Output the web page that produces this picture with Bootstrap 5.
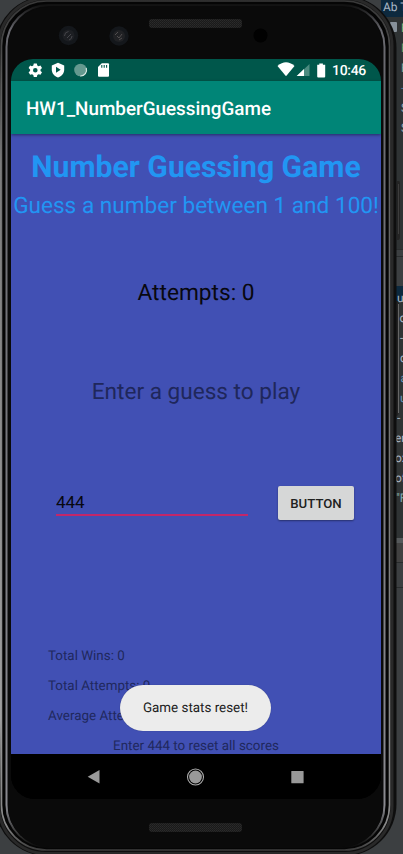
<!DOCTYPE html>
<html lang="en">
<head>
<meta charset="utf-8">
<meta name="viewport" content="width=device-width, initial-scale=1">
<title>HW1_NumberGuessingGame</title>
<link href="https://cdn.jsdelivr.net/npm/bootstrap@5.3.0/dist/css/bootstrap.min.css" rel="stylesheet">
<style>
body{width:403px;height:854px;background:#3c3f41;font-family:Roboto,"Liberation Sans",sans-serif;line-height:1;text-rendering:geometricPrecision}
.editor{right:0;top:0;width:22px;height:854px;background:#3c3f41;font-size:12px;color:#a9b7c6}
.code{background:#2f3334;height:232px}
.line{height:20px;line-height:22px;white-space:pre;overflow:hidden;padding-left:20px}
.tabrow{height:17px;background:#0d293e;font-size:12px;line-height:14px;padding-left:2px;white-space:pre}
.frame{left:0;top:0}
.phone{height:854px;padding:59px 22px 55px 11px}
.screen{width:370px;border-radius:22px 22px 24px 24px;height:740px;background:#000}
.status{height:22px;background:#00574b;font-size:14px;padding:1px 15px 0 17px}
.clock{font-weight:500;margin-left:6px;letter-spacing:-.3px}
.appbar{height:53px;background:#008577;font-size:18.85px;font-weight:500;padding:3px 15px 0;box-shadow:0 1px 3px rgba(0,0,0,.45);z-index:1}
.content{height:620px;background:#4150b4}
.title{font-size:30.15px;height:36px;margin-top:16px;line-height:36px;color:#2196f3;white-space:nowrap}
.sub{font-size:22.6px;line-height:28px;margin-top:6px;color:#2196f3;white-space:nowrap}
.tries{font-size:22.7px;line-height:28px;margin-top:59px;color:#08080f}
.hint{font-size:22.6px;line-height:28px;margin-top:71px;color:#1f275b}
.entry{margin-top:80px;height:34px;padding:0 27px 0 45px}
.guess{width:192px;height:30px;border:0;border-bottom:2px solid #c2276a;background:transparent;font-size:17px;padding:3px 0 0;border-radius:0;color:#08080f;outline:0}
.btn-play{width:76px;height:34px;border-radius:2px;background:#d6d7d7;color:#202121;font-size:13.2px;font-weight:500;padding:1px 0 0;border:0;box-shadow:0 1px 2px rgba(0,0,0,.4)}
.stats{margin-top:122px;padding-left:37px;font-size:13.4px;color:#20285d}
.stats div{height:30px;line-height:30px}
.foot{font-size:13.4px;line-height:30px;color:#20285d;height:22px}
.toast-pill{left:109px;top:626px;width:151px;height:46px;border-radius:23px;background:#ececec;color:#202020;font-size:13.4px;padding-top:2px;box-shadow:0 0 1px rgba(0,0,0,.35)}
.navkeys{height:45px;background:#000}
</style>
</head>
<body class="position-relative overflow-hidden m-0">
<div class="editor position-absolute overflow-hidden">
  <div class="tabrow">Ab T</div>
  <div class="code">
    <div class="line" style="color:#7fb57b">F</div><div class="line" style="color:#6a9b68">F</div><div class="line" style="color:#7aa39a">F</div><div class="line" style="color:#5078a0">-</div><div class="line" style="color:#91aab8">S</div><div class="line" style="color:#91aab8">S</div>
  </div>
</div>
<svg class="frame position-absolute" width="403" height="854" viewBox="0 0 403 854" aria-hidden="true">
  <defs>
    <linearGradient id="rim" x1="0" y1="0" x2="0" y2="1"><stop offset="0" stop-color="#393939"/><stop offset=".1" stop-color="#555"/><stop offset=".45" stop-color="#707070"/><stop offset=".86" stop-color="#8a8a8a"/><stop offset=".97" stop-color="#888"/><stop offset="1" stop-color="#3c3c3c"/></linearGradient>
    <linearGradient id="inner" x1="0" y1="0" x2="0" y2="1"><stop offset="0" stop-color="#111"/><stop offset=".03" stop-color="#68686e"/><stop offset=".5" stop-color="#77777c"/><stop offset=".95" stop-color="#8a8a90"/><stop offset=".985" stop-color="#333"/><stop offset="1" stop-color="#0a0a0a"/></linearGradient>
    <linearGradient id="side" x1="0" y1="0" x2="0" y2="1"><stop offset="0" stop-color="#777" stop-opacity="0"/><stop offset=".15" stop-color="#7c7c7c"/><stop offset=".88" stop-color="#a0a0a0"/><stop offset="1" stop-color="#999" stop-opacity="0"/></linearGradient>
    <pattern id="mesh" width="2" height="2" patternUnits="userSpaceOnUse"><rect width="2" height="2" fill="#1a1a1a"/><rect width="1" height="1" fill="#2b2b2b"/><rect x="1" y="1" width="1" height="1" fill="#262626"/></pattern>
  </defs>
  <path d="M381 297H403V540H381z" fill="#2f3334"/>
  <path d="M381 286H403V302H381z" fill="#0d293e"/>
  <path d="M381 538H403V543H381z" fill="#55595b"/>
  <path d="M381 543H403V562H381z" fill="#414141"/>
  <path d="M381 249H403V250H381zM381 256H403V257H381zM381 562H403V563H381zM381 587H403V588H381z" fill="#292c2d"/>
  <g font-family="Roboto, sans-serif" font-size="12" fill="#a9b7c6">
    <text x="397" y="302">u</text><text x="399.500" y="322">o</text><text x="400" y="342">-</text><text x="400" y="362">c</text><text x="400.500" y="382" fill="#6897bb">a</text><text x="400" y="402" fill="#6897bb">u</text><text x="397" y="422">-</text><text x="395" y="442">er</text><text x="395" y="462">ox</text><text x="395" y="482">of</text><text x="396" y="502" fill="#7fa8ad">"F</text>
  </g>
  <rect x="390" y="22" width="7" height="10" rx="1" fill="#87919a"/>
  <path d="M397 181h2q1 0 1 3v52q0 4-2 4h-1z" fill="#242424"/><path d="M398.500 184v50" stroke="#3d3d3d"/>
  <path d="M396 301h2q1 2 1 6v102q0 6-2 7h-1z" fill="#222"/><path d="M398.500 304v109" stroke="#666"/>
  <rect x="-5" y="-4" width="401.500" height="860" rx="52" fill="#0e0e0e"/>
  <rect x="-1" y="-1.500" width="393" height="855" rx="47" fill="none" stroke="#292929" stroke-width="3"/>
  <rect x="1.500" y="1" width="388" height="849" rx="45" fill="#050505" stroke="url(#rim)" stroke-width="1.600"/>
  <rect x="0" y="50" width="1.600" height="760" fill="url(#side)"/>
  <rect x="6.500" y="5" width="378" height="842" rx="42" fill="#0a0a0a" stroke="url(#inner)" stroke-width="2"/>
  <rect x="8.500" y="7" width="374" height="840" rx="40" fill="#0a0a0a"/>
  <rect x="149" y="19" width="93" height="9" rx="3" fill="url(#mesh)"/>
  <rect x="149" y="823" width="93" height="9" rx="3" fill="url(#mesh)"/>
  <g><circle cx="68.500" cy="35.500" r="9.700" fill="#14171b"/><circle cx="68.500" cy="35.500" r="6" fill="#1d1f23"/><path d="M64.500 36q0-4 4-4.500M67 38l4-4M69 40q3-1 3-4" stroke="#45454a" fill="none"/></g>
  <g><circle cx="119" cy="36" r="9.700" fill="#14171b"/><circle cx="119" cy="36" r="6" fill="#202124"/><path d="M115 35l3-3M117 36l2 2 3-4M119 40l3-2" stroke="#504d4e" fill="none"/></g>
  <circle cx="260.500" cy="35.500" r="7" fill="#010101"/>
</svg>
<main class="phone position-relative">
  <div class="screen position-relative overflow-hidden d-flex flex-column">
    <div class="status d-flex align-items-center text-white flex-shrink-0">
      <svg class="mb-1" width="83" height="22" viewBox="0 0 83 22" aria-hidden="true">
        <path fill="#fff" fill-rule="evenodd" d="M5.800 5.500h3l.5 1.900 1.300.8 1.900-.6 1.500 2.500-1.500 1.400v1.400l1.500 1.300-1.500 2.600-1.900-.6-1.300.8-.5 1.900h-3l-.5-1.900-1.300-.8-1.900.6-1.500-2.600 1.500-1.300v-1.400L.6 10.100l1.500-2.500 1.900.6 1.300-.8zM7.300 9.900a2.300 2.300 0 1 0 0 4.600 2.300 2.300 0 0 0 0-4.600z"/>
        <path fill="#fff" d="M30 4.800l6.200 2.600v4.300c0 3.800-2.600 6.400-6.200 7.700-3.600-1.300-6.200-3.900-6.200-7.700V7.400z"/><path fill="#00574b" d="M28 8.800v6l4.700-3z"/>
        <circle cx="52.500" cy="12" r="6.300" fill="#65998f"/><path d="M58.200 10a6 6 0 0 1-6 8" fill="none" stroke="#d5e5e0" stroke-width="1.200"/>
        <path fill="#fff" d="M73.800 5.300h6.200q1 0 1 1v11.400q0 1-1 1H71q-1 0-1-1V9z"/><path d="M73.800 7v2.700M76.200 7v2.700M78.600 7v2.700" stroke="#00574b" stroke-width="1.100"/>
      </svg>
      <svg class="ms-auto" width="49" height="22" viewBox="0 0 49 22" aria-hidden="true">
        <path fill="#fff" d="M.5 6Q9-1.500 17.500 6L9 16.300z"/><path fill="#4c8b80" d="M32.500 4v12H19.700z"/><path fill="#fff" d="M27 9v7h-7.300z"/>
        <path fill="#fff" d="M42.300 3.500h3.600v1.200h2.300V16.500q0 1-1 1h-6q-1 0-1-1V4.700h2.100z"/>
      </svg>
      <span class="clock">10:46</span>
    </div>
    <div class="appbar d-flex align-items-center text-white flex-shrink-0 position-relative">HW1_NumberGuessingGame</div>
    <div class="content flex-shrink-0">
      <div class="d-flex flex-column h-100 text-center">
        <h1 class="title fw-bold mb-0">Number Guessing Game</h1>
        <div class="sub">Guess a number between 1 and 100!</div>
        <div class="tries">Attempts: 0</div>
        <div class="hint">Enter a guess to play</div>
        <div class="entry d-flex justify-content-between align-items-start">
          <input class="guess" value="444" aria-label="Guess">
          <button class="btn btn-play">BUTTON</button>
        </div>
        <div class="stats text-start"><div>Total Wins: 0</div><div>Total Attempts: 0</div><div>Average Attempts: 0</div></div>
        <div class="foot">Enter 444 to reset all scores</div>
      </div>
    </div>
    <div class="navkeys d-flex flex-shrink-0 align-items-center">
      <svg width="370" height="45" viewBox="0 0 370 45" aria-hidden="true"><path d="M88.500 16v13.500L76.700 22.700z" fill="#999"/><circle cx="184.500" cy="23" r="6.400" fill="#999"/><circle cx="184.500" cy="23" r="8" fill="none" stroke="#aaa" stroke-width="1.100"/><rect x="280.300" y="17" width="12.300" height="12.300" rx=".6" fill="#999"/></svg>
    </div>
    <div class="toast-pill position-absolute d-flex align-items-center justify-content-center">Game stats reset!</div>
  </div>
</main>
<script src="https://cdn.jsdelivr.net/npm/bootstrap@5.3.0/dist/js/bootstrap.bundle.min.js"></script>
</body>
</html>
